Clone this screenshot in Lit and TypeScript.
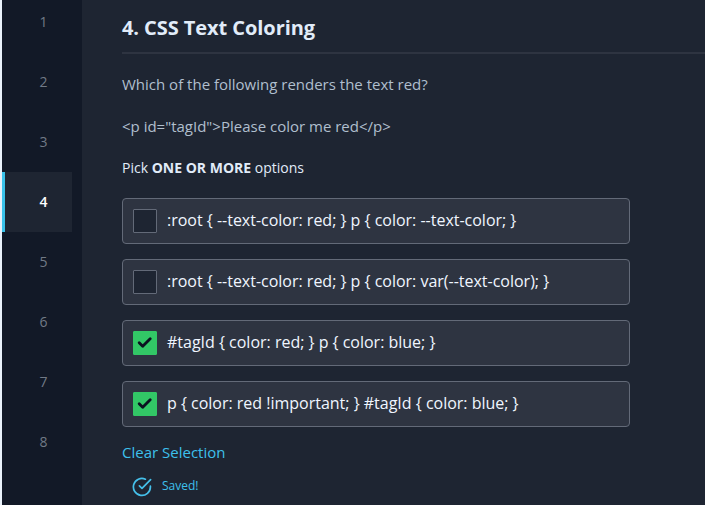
import { LitElement, html, css } from "lit";
import { customElement, property, state } from "lit/decorators.js";
import { classMap } from "lit/directives/class-map.js";

interface Option {
  text: string;
  checked: boolean;
}

@customElement("question-nav")
class QuestionNav extends LitElement {
  @property({ type: Number }) current = 4;

  static styles = css`
    :host {
      display: block;
      flex: none;
      width: 80px;
      background: #121927;
      border-left: 2px solid #eaf2fb;
      overflow: hidden;
    }
    .list {
      display: flex;
      flex-direction: column;
      margin-top: -8px;
    }
    .item {
      box-sizing: border-box;
      width: 70px;
      height: 60px;
      padding-left: 10px;
      border-left: 3px solid transparent;
      display: flex;
      align-items: center;
      justify-content: center;
      font-size: 14px;
      line-height: 20px;
      color: #717986;
    }
    .item.active {
      background: #1e2532;
      border-left-color: #39c2ea;
      color: #ffffff;
      font-weight: 600;
    }
  `;

  render() {
    return html`<nav class="list">
      ${[1, 2, 3, 4, 5, 6, 7, 8].map(
        (n) => html`<div class=${classMap({ item: true, active: n === this.current })}>${n}</div>`
      )}
    </nav>`;
  }
}

@customElement("option-row")
class OptionRow extends LitElement {
  @property() text = "";
  @property({ type: Boolean }) checked = false;

  static styles = css`
    :host {
      display: block;
    }
    .row {
      box-sizing: border-box;
      width: 508px;
      height: 46px;
      padding: 0 10px;
      display: flex;
      align-items: center;
      gap: 10px;
      background: #2e3441;
      border: 1px solid #636a78;
      border-radius: 4px;
    }
    .box {
      box-sizing: border-box;
      flex: none;
      width: 24px;
      height: 24px;
      border: 1px solid #636a78;
      border-radius: 1px;
      background: #1e2532;
      display: flex;
      align-items: center;
      justify-content: center;
    }
    .box.on {
      background: #32c766;
      border-color: #32c766;
    }
    .label {
      font-size: 16px;
      line-height: 24px;
      padding-bottom: 2px;
      letter-spacing: -0.01px;
      color: #f0f6ff;
      white-space: nowrap;
    }
    svg {
      display: block;
    }
  `;

  render() {
    return html`<div class="row">
      <span class=${classMap({ box: true, on: this.checked })}>
        ${this.checked
          ? html`<svg width="22" height="22" viewBox="0 0 22 22" fill="none">
              <path d="M5.2 10.8 8.7 14.2 16.2 6.8" stroke="#0b1220" stroke-width="2.9" stroke-linecap="round" stroke-linejoin="round" />
            </svg>`
          : ""}
      </span>
      <span class="label">${this.text}</span>
    </div>`;
  }
}

@customElement("app-root")
class AppRoot extends LitElement {
  @state() private options: Option[] = [
    { text: ":root { --text-color: red; } p { color: --text-color; }", checked: false },
    { text: ":root { --text-color: red; } p { color: var(--text-color); }", checked: false },
    { text: "#tagId { color: red; } p { color: blue; }", checked: true },
    { text: "p { color: red !important; } #tagId { color: blue; }", checked: true },
  ];

  static styles = css`
    :host {
      display: flex;
      height: 505px;
      overflow: hidden;
      background: #1e2532;
      font-family: "Open Sans", "Noto Sans", sans-serif;
    }
    .main {
      flex: 1;
      min-width: 0;
      padding-left: 40px;
    }
    .title {
      box-sizing: border-box;
      margin: 0;
      height: 54px;
      padding-top: 14px;
      border-bottom: 2px solid #2e3441;
      font-size: 20px;
      line-height: 28px;
      font-weight: 700;
      letter-spacing: -0.07px;
      color: #e1ecf9;
    }
    .text {
      margin: 0;
      font-size: 15px;
      line-height: 22px;
      color: #b0bfce;
    }
    .question {
      margin-top: 19px;
    }
    .code {
      margin-top: 20px;
    }
    .hint {
      margin: 21px 0 0;
      font-size: 14px;
      line-height: 20px;
      color: #e1ecf9;
    }
    .options {
      display: flex;
      flex-direction: column;
      gap: 15px;
      margin-top: 20px;
    }
    .clear {
      margin-top: 14px;
      font-size: 15px;
      line-height: 22px;
      color: #3dc0ec;
    }
    .saved {
      display: flex;
      align-items: center;
      gap: 9px;
      margin: 13px 0 0 10px;
      font-size: 12px;
      line-height: 20px;
      color: #3dc0ec;
    }
    .saved svg {
      display: block;
    }
    .savedtext {
      padding-bottom: 2px;
    }
  `;

  render() {
    return html`
      <question-nav .current=${4}></question-nav>
      <main class="main">
        <h1 class="title">4. CSS Text Coloring</h1>
        <p class="text question">Which of the following renders the text red?</p>
        <p class="text code">${'<p id="tagId">Please color me red</p>'}</p>
        <p class="hint">Pick <b>ONE OR MORE</b> options</p>
        <div class="options">
          ${this.options.map((o) => html`<option-row .text=${o.text} .checked=${o.checked}></option-row>`)}
        </div>
        <div class="clear">Clear Selection</div>
        <div class="saved">
          <svg width="21" height="20" viewBox="0 0 21 20" fill="none" stroke="#45c0ea" stroke-width="1.7" stroke-linecap="round" stroke-linejoin="round">
            <path d="M18.4 9.2v.8a8.5 8.5 0 1 1-5-7.8" />
            <path d="M18.6 2.6 10 11.3 7.4 8.8" />
          </svg>
          <span class="savedtext">Saved!</span>
        </div>
      </main>
    `;
  }
}
